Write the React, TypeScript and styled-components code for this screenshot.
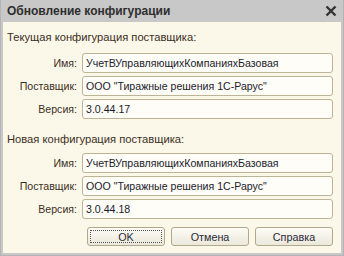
import React from "react";
import styled, { createGlobalStyle } from "styled-components";

const Global = createGlobalStyle`
  html, body { margin: 0; padding: 0; background: #ffffff; }
  body { font-family: "Liberation Sans", Arial, sans-serif; }
`;

const Dialog = styled.div`
  width: 344px;
  height: 256px;
  box-sizing: border-box;
  display: flex;
  flex-direction: column;
  background: #c8c8c8;
  border: 1px solid #b4b4b4;
  border-top: none;
`;

const TitleBar = styled.div`
  height: 22px;
  flex: none;
  display: flex;
  align-items: center;
  justify-content: space-between;
  padding: 0 6px 0 6px;
  font-size: 12px;
  font-weight: bold;
  color: #2e2e2e;
`;

const Body = styled.div`
  flex: 1;
  margin: 0 2px 2px 2px;
  background: #fbf8ea;
  display: flex;
  flex-direction: column;
  padding: 8px 8px 0 4px;
`;

const Heading = styled.div<{ $top: number }>`
  margin-top: ${(p) => p.$top}px;
  font-size: 11.2px;
  line-height: 14px;
  height: 14px;
  color: #3c2e22;
`;

const Rows = styled.div<{ $top: number }>`
  margin-top: ${(p) => p.$top}px;
  display: grid;
  grid-template-columns: 70px 1fr;
  column-gap: 5px;
  row-gap: 3px;
`;

const Label = styled.div`
  font-size: 10.6px;
  color: #3c2e22;
  text-align: right;
  align-self: center;
`;

const Field = styled.div`
  height: 20px;
  box-sizing: border-box;
  border: 1px solid #bdb395;
  border-radius: 3px;
  background: #fefdf7;
  font-size: 10.6px;
  line-height: 18px;
  padding-left: 3px;
  color: #1c1c2c;
  white-space: nowrap;
  overflow: hidden;
`;

const Buttons = styled.div`
  margin-top: 8px;
  display: flex;
  justify-content: flex-end;
  gap: 6px;
`;

const Button = styled.div<{ $focused?: boolean }>`
  width: 78px;
  height: 19px;
  box-sizing: border-box;
  border: 1px solid #b2a98c;
  border-radius: 3px;
  background: linear-gradient(#fdfcf6, #ebe8da);
  font-size: 10.8px;
  color: #2a2a3a;
  display: flex;
  align-items: center;
  justify-content: center;
  position: relative;
  ${(p) =>
    p.$focused &&
    `&::after { content: ""; position: absolute; inset: 2px; border: 1px dotted #555; border-radius: 1px; }`}
`;

const Close = () => (
  <svg width="12" height="12" viewBox="0 0 12 12">
    <path d="M1.5 1.5 L10.5 10.5 M10.5 1.5 L1.5 10.5" stroke="#333" strokeWidth="2.4" />
  </svg>
);

type Info = { name: string; vendor: string; version: string };

const Group = ({ title, info, headTop, rowsTop }: { title: string; info: Info; headTop: number; rowsTop: number }) => (
  <>
    <Heading $top={headTop}>{title}</Heading>
    <Rows $top={rowsTop}>
      <Label>Имя:</Label>
      <Field>{info.name}</Field>
      <Label>Поставщик:</Label>
      <Field>{info.vendor}</Field>
      <Label>Версия:</Label>
      <Field>{info.version}</Field>
    </Rows>
  </>
);

export default function App() {
  return (
    <>
      <Global />
      <Dialog>
        <TitleBar>
          <span>Обновление конфигурации</span>
          <Close />
        </TitleBar>
        <Body>
          <Group
            title="Текущая конфигурация поставщика:"
            headTop={0}
            rowsTop={9}
            info={{ name: "УчетВУправляющихКомпанияхБазовая", vendor: 'ООО "Тиражные решения 1С-Рарус"', version: "3.0.44.17" }}
          />
          <Group
            title="Новая конфигурация поставщика:"
            headTop={13}
            rowsTop={7}
            info={{ name: "УчетВУправляющихКомпанияхБазовая", vendor: 'ООО "Тиражные решения 1С-Рарус"', version: "3.0.44.18" }}
          />
          <Buttons>
            <Button $focused>OK</Button>
            <Button>Отмена</Button>
            <Button>Справка</Button>
          </Buttons>
        </Body>
      </Dialog>
    </>
  );
}
